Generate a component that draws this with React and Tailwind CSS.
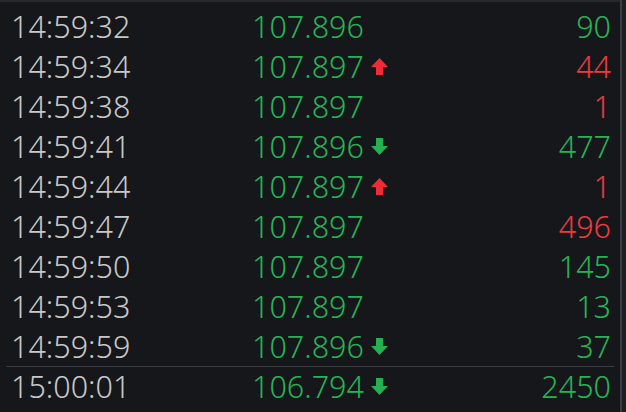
const trades = [
  { time: '14:59:32', price: '107.896', dir: null, qty: '90', qtyUp: true },
  { time: '14:59:34', price: '107.897', dir: 'up', qty: '44', qtyUp: false },
  { time: '14:59:38', price: '107.897', dir: null, qty: '1', qtyUp: false },
  { time: '14:59:41', price: '107.896', dir: 'down', qty: '477', qtyUp: true },
  { time: '14:59:44', price: '107.897', dir: 'up', qty: '1', qtyUp: false },
  { time: '14:59:47', price: '107.897', dir: null, qty: '496', qtyUp: false },
  { time: '14:59:50', price: '107.897', dir: null, qty: '145', qtyUp: true },
  { time: '14:59:53', price: '107.897', dir: null, qty: '13', qtyUp: true },
  { time: '14:59:59', price: '107.896', dir: 'down', qty: '37', qtyUp: true },
  { time: '15:00:01', price: '106.794', dir: 'down', qty: '2450', qtyUp: true, last: true },
];

const Arrow = ({ dir }) => {
  if (dir === 'up') {
    return (
      <svg width="17" height="17" viewBox="0 0 17 17" className="ml-[7px]">
        <path d="M8.5 0 L17 9 L12 9 L12 17 L5 17 L5 9 L0 9 Z" fill="#ee2b36" />
      </svg>
    );
  }
  return (
    <svg width="17" height="17" viewBox="0 0 17 17" className="ml-[7px]">
      <path d="M8.5 17 L17 8 L12 8 L12 0 L5 0 L5 8 L0 8 Z" fill="#25b052" />
    </svg>
  );
};

export default function App() {
  return (
    <div
      className="w-[626px] h-[412px] bg-[#15171b] flex overflow-hidden"
      style={{ fontFamily: '"Noto Sans", "Open Sans", sans-serif' }}
    >
      <div className="w-[620px] border-t-2 border-[#26282c] pt-[4px] flex flex-col">
        {trades.map((t, i) => (
          <div key={i}>
            {t.last && <div className="h-px bg-[#3a3c40] mx-[6px] -mb-px" />}
            <div className="h-[40px] flex items-center text-[30.5px] font-[360] leading-none pl-[11px] pr-[9px]">
              <div className="w-[241px] text-[#c8c8c8]">{t.time}</div>
              <div className="flex items-center text-[#26b356] w-[200px]">
                <span>{t.price}</span>
                {t.dir && <Arrow dir={t.dir} />}
              </div>
              <div className={`flex-1 text-right ${t.qtyUp ? 'text-[#26b356]' : 'text-[#ee3a40]'}`}>
                {t.qty}
              </div>
            </div>
          </div>
        ))}
      </div>
      <div className="w-[6px] border-l-2 border-[#3a3d42] bg-[#1d1f23]" />
    </div>
  );
}
